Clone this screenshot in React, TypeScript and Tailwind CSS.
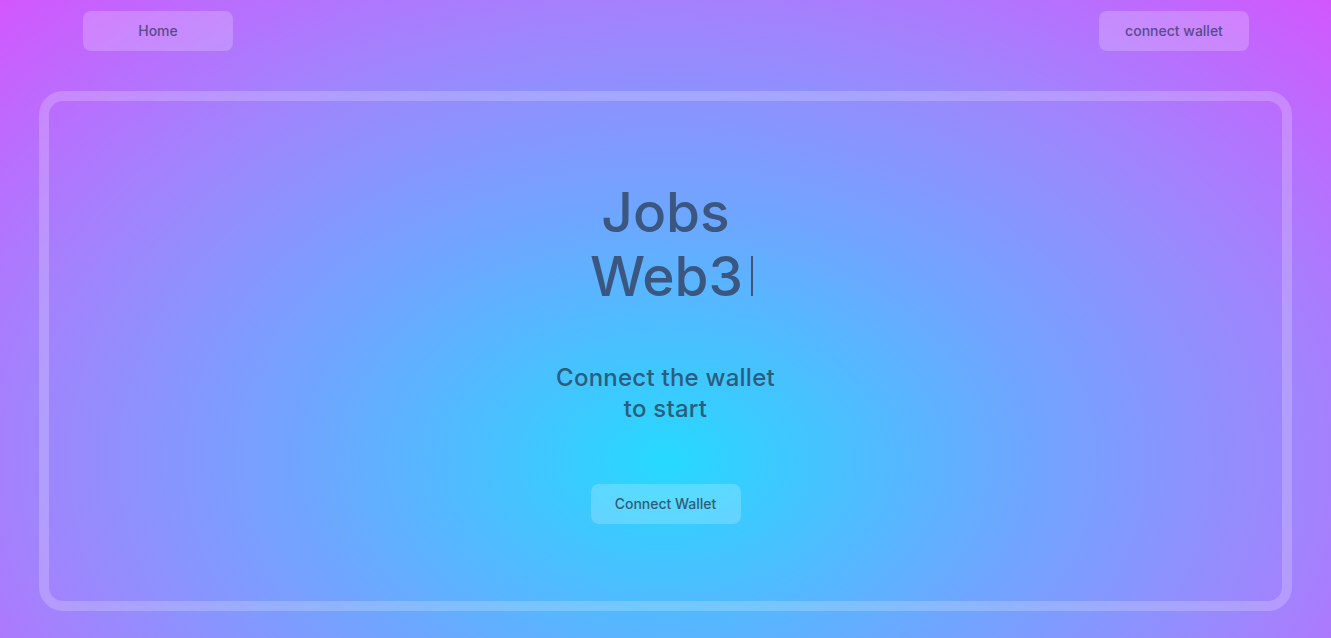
export default function App() {
  return (
    <div className="min-h-screen w-full bg-[radial-gradient(ellipse_at_50%_72%,#26d9ff_0%,#6ea6ff_38%,#a184fd_68%,#d257fd_100%)] font-['Inter',sans-serif]">
      <nav className="flex items-center justify-between pl-[83px] pr-[82px] pt-[11px]">
        <button className="h-10 w-[150px] rounded-lg bg-white/20 text-sm font-medium text-[#5a4a8a]">
          Home
        </button>
        <button className="h-10 w-[150px] rounded-lg bg-white/20 text-sm font-medium text-[#5a4a8a]">
          connect wallet
        </button>
      </nav>

      <main className="px-[39px] pt-[40px] pb-7">
        <div className="flex h-[520px] flex-col items-center rounded-[24px] border-[10px] border-white/20">
          <h1 className="mt-[79px] flex flex-col items-center text-[55px] leading-[64px] font-medium text-[#3b577f]">
            <span>Jobs</span>
            <span className="ml-3 flex items-center">
              Web3
              <span className="ml-2 inline-block h-[40px] w-[2px] bg-[#3b577f]" />
            </span>
          </h1>

          <p className="mt-[54px] text-center text-2xl leading-[31px] font-medium tracking-[0.01em] text-[#2b5d7c]">
            Connect the wallet
            <br />
            to start
          </p>

          <button className="mt-[60px] h-10 w-[150px] rounded-lg bg-white/20 text-sm font-medium text-[#2f5d78]">
            Connect Wallet
          </button>
        </div>
      </main>
    </div>
  );
}
